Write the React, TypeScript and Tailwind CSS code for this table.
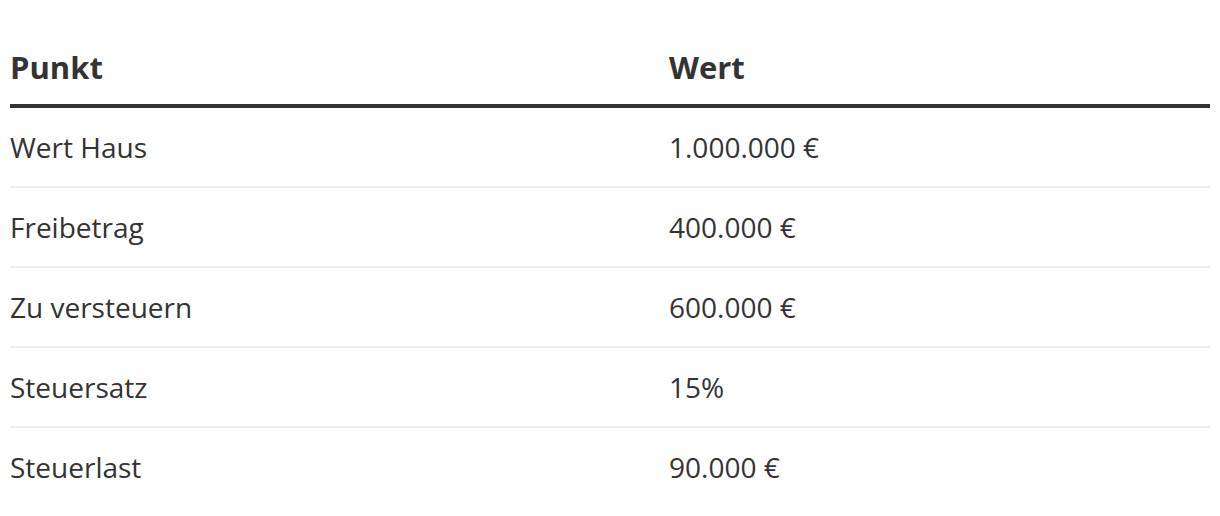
import React from 'react';

const rows = [
  { punkt: 'Wert Haus', wert: '1.000.000 €' },
  { punkt: 'Freibetrag', wert: '400.000 €' },
  { punkt: 'Zu versteuern', wert: '600.000 €' },
  { punkt: 'Steuersatz', wert: '15%' },
  { punkt: 'Steuerlast', wert: '90.000 €' },
];

const App = () => {
  return (
    <div className="min-h-screen bg-white px-[10px] pt-[26px] font-['Open_Sans',sans-serif] text-[#333]">
      <table className="w-full border-collapse text-left text-[28px] leading-[42px]">
        <thead>
          <tr className="border-b-4 border-[#333]">
            <th className="w-[659px] pt-[20px] pb-[16px] text-[31px] font-bold">Punkt</th>
            <th className="pt-[20px] pb-[16px] text-[31px] font-bold">Wert</th>
          </tr>
        </thead>
        <tbody>
          {rows.map((r, i) => (
            <tr key={r.punkt} className={i < rows.length - 1 ? 'border-b-2 border-[#eee]' : ''}>
              <td className="py-[18px]">{r.punkt}</td>
              <td className="py-[18px]">{r.wert}</td>
            </tr>
          ))}
        </tbody>
      </table>
    </div>
  );
};

export default App;
